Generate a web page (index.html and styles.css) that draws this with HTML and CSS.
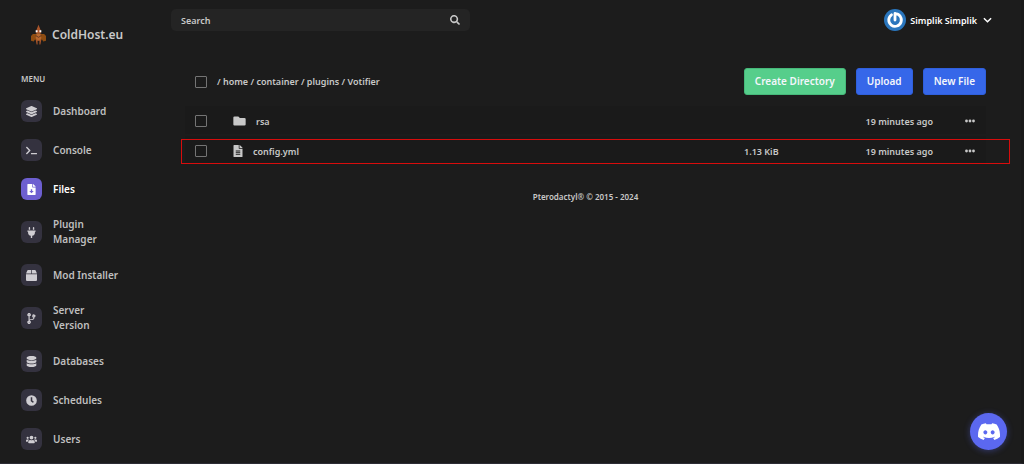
FILE: index.html
```
<!DOCTYPE html>
<html lang="en">
<head>
<meta charset="utf-8">
<meta name="viewport" content="width=device-width, initial-scale=1">
<title>ColdHost.eu</title>
<link rel="stylesheet" href="styles.css">
</head>
<body>
<div class="app">
  <aside class="sidebar">
    <a class="brand" href="#">
      <svg class="brand-logo" viewBox="0 0 16 22" aria-hidden="true">
        <path fill="#a9552a" d="M8 0 6 5 5 9h6l-1-4z"/>
        <path fill="#8f4d12" d="M2 10h12l2 2v5l-3 1-1-2H4l-1 2-3-1v-5z"/>
        <path fill="#b8692f" d="M6 9h4l1 5-1 3H6l-1-3z"/>
        <path fill="#a9552a" d="M5 16h2v5H6zM9 16h2l-1 5H9z"/>
        <path fill="#5b3524" d="M5 11l3 2 3-2v1l-3 2-3-2z"/>
        <path fill="#fff" d="M5 6h2v2H5zM9 6h2v2H9z"/>
      </svg>
      <span>ColdHost.eu</span>
    </a>
    <h2 class="menu-title">MENU</h2>
    <nav class="menu">
      <a class="item" href="#"><span class="tile"><svg viewBox="0 0 512 512"><path d="M12 148l232 105c8 4 17 4 25 0l232-105c16-7 16-32 0-39L269 4c-8-4-17-4-25 0L12 109c-16 7-16 32 0 39zm488 88l-58-26-160 72c-17 8-35 8-52 0L70 210l-58 26c-16 7-16 32 0 39l232 105c8 4 17 4 25 0l231-105c16-7 16-32 0-39zm0 128l-58-26-160 72c-17 8-35 8-52 0L70 338l-58 26c-16 7-16 32 0 39l232 105c8 4 17 4 25 0l231-105c16-7 16-32 0-39z"/></svg></span>Dashboard</a>
      <a class="item" href="#"><span class="tile"><svg viewBox="0 0 640 512"><path d="M258 274L64 467c-9 10-24 10-34 0L7 445c-9-10-9-25 0-34l154-155L7 101c-9-9-9-24 0-34l23-22c10-10 25-10 34 0l194 194c9 9 9 25 0 35zm382 150v32c0 13-11 24-24 24H312c-13 0-24-11-24-24v-32c0-13 11-24 24-24h304c13 0 24 11 24 24z"/></svg></span>Console</a>
      <a class="item active" href="#" aria-current="page"><span class="tile"><svg viewBox="0 0 384 512"><path fill-rule="evenodd" d="M224 136V0H24C11 0 0 11 0 24v464c0 13 11 24 24 24h336c13 0 24-11 24-24V160H248c-13 0-24-11-24-24zm-64 104h64v80h72L192 432 88 320h72zM256 0v128h128v-6c0-6-3-12-7-17L279 7c-5-4-11-7-17-7z"/></svg></span>Files</a>
      <a class="item" href="#"><span class="tile"><svg viewBox="0 0 384 512"><path d="M320 32a32 32 0 0 0-64 0v96h64zm48 128H16c-9 0-16 7-16 16v32c0 9 7 16 16 16h16v32a160 160 0 0 0 128 157v99h64v-99a160 160 0 0 0 128-157v-32h16c9 0 16-7 16-16v-32c0-9-7-16-16-16zM128 32a32 32 0 0 0-64 0v96h64z"/></svg></span>Plugin Manager</a>
      <a class="item" href="#"><span class="tile"><svg viewBox="0 0 512 512"><path d="M510 160L457 33a48 48 0 0 0-45-33H272v160zM240 0H100a48 48 0 0 0-45 33L2 160h238zM0 192v272a48 48 0 0 0 48 48h416a48 48 0 0 0 48-48V192z"/></svg></span>Mod Installer</a>
      <a class="item" href="#"><span class="tile"><svg viewBox="0 0 384 512"><path fill-rule="evenodd" d="M384 144a80 80 0 1 0-104 76c0 16-4 30-11 40-15 20-48 23-82 27-27 2-55 5-79 15V156a80 80 0 1 0-56 0v200a80 80 0 1 0 59 2c4-9 9-16 17-20 15-8 39-10 64-12 42-4 90-8 118-46 15-20 22-45 22-77a80 80 0 0 0 52-59zM80 64a16 16 0 1 1 0 32 16 16 0 0 1 0-32zm0 384a16 16 0 1 1 0-32 16 16 0 0 1 0 32zm224-320a16 16 0 1 1 0 32 16 16 0 0 1 0-32z"/></svg></span>Server Version</a>
      <a class="item" href="#"><span class="tile"><svg viewBox="0 0 448 512"><path d="M448 73v46c0 40-100 73-224 73S0 159 0 119V73C0 33 100 0 224 0s224 33 224 73zm0 103v103c0 40-100 73-224 73S0 319 0 279V176c48 33 136 49 224 49s176-16 224-49zm0 160v103c0 40-100 73-224 73S0 479 0 439V336c48 33 136 49 224 49s176-16 224-49z"/></svg></span>Databases</a>
      <a class="item" href="#"><span class="tile"><svg viewBox="0 0 512 512"><path fill-rule="evenodd" d="M256 8a248 248 0 1 0 0 496 248 248 0 0 0 0-496zm57 350l-88-64c-3-2-5-6-5-10V116c0-7 5-12 12-12h48c7 0 12 5 12 12v138l65 47c5 4 6 12 2 17l-28 39c-4 5-12 6-18 1z"/></svg></span>Schedules</a>
      <a class="item" href="#"><span class="tile"><svg viewBox="0 0 640 512"><path d="M96 224a64 64 0 1 0 0-128 64 64 0 0 0 0 128zm448 0a64 64 0 1 0 0-128 64 64 0 0 0 0 128zm32 32h-64c-18 0-34 7-45 19 40 22 69 62 75 109h66c18 0 32-14 32-32v-32a64 64 0 0 0-64-64zm-256 0a112 112 0 1 0 0-224 112 112 0 0 0 0 224zm77 32h-8a155 155 0 0 1-138 0h-8A115 115 0 0 0 128 403v29c0 27 22 48 48 48h288c27 0 48-21 48-48v-29a115 115 0 0 0-115-115zm-224-13c-11-12-27-19-45-19H64a64 64 0 0 0-64 64v32c0 18 14 32 32 32h66c6-47 35-87 75-109z"/></svg></span>Users</a>
    </nav>
  </aside>

  <div class="page">
    <header class="topbar">
      <form class="search" role="search">
        <input class="search-input" type="search" placeholder="Search" aria-label="Search">
        <button class="plain" type="button" aria-label="Submit search"><svg class="search-icon" viewBox="0 0 512 512"><path fill-rule="evenodd" d="M505 443L405 343c-4-5-10-7-17-7h-16a208 208 0 1 0-36 36v16c0 7 2 13 7 17l100 100c9 9 24 9 34 0l28-28c9-10 9-25 0-34zM208 336a128 128 0 1 1 0-256 128 128 0 0 1 0 256z"/></svg></button>
      </form>
      <button class="plain account" type="button">
        <svg class="avatar" viewBox="0 0 22 22" aria-hidden="true">
          <circle cx="11" cy="11" r="11" fill="#2a76bd"/>
          <path d="M11 4.500v6.500M7.500 5.800A6.300 6.300 0 1 0 11 4.700c5 0 6.500 4 6.200 6.800" fill="none" stroke="#fff" stroke-width="2.800" stroke-linecap="round"/>
        </svg>
        <span>Simplik Simplik</span>
        <svg class="chevron" viewBox="0 0 10 6" aria-hidden="true"><path d="M1 1l4 4 4-4" fill="none" stroke="currentColor" stroke-width="1.600"/></svg>
      </button>
    </header>

    <main class="content">
      <div class="toolbar">
        <input class="check" type="checkbox" aria-label="Select all files">
        <p class="path">/ home / container / plugins / Votifier</p>
        <div class="actions">
          <button class="btn btn-green" type="button">Create Directory</button>
          <button class="btn" type="button">Upload</button>
          <button class="btn" type="button">New File</button>
        </div>
      </div>

      <table class="files">
        <colgroup><col class="col-check"><col><col class="col-size"><col class="col-date"><col class="col-more"></colgroup>
        <tbody>
          <tr>
            <td><input class="check" type="checkbox" aria-label="Select rsa"></td>
            <td><a class="file" href="#"><svg class="folder" viewBox="0 0 512 416"><path d="M464 80H272L208 16H48A48 48 0 0 0 0 64v288a48 48 0 0 0 48 48h416a48 48 0 0 0 48-48V128a48 48 0 0 0-48-48z"/></svg>rsa</a></td>
            <td></td>
            <td class="date">19 minutes ago</td>
            <td class="more"><button class="plain" type="button" aria-label="Actions for rsa"><svg class="dots" viewBox="0 0 10 4"><circle cx="1.500" cy="2" r="1.400"/><circle cx="5" cy="2" r="1.400"/><circle cx="8.500" cy="2" r="1.400"/></svg></button></td>
          </tr>
          <tr class="marked">
            <td><input class="check" type="checkbox" aria-label="Select config.yml"></td>
            <td><a class="file" href="#"><svg class="doc" viewBox="0 0 384 512"><path fill-rule="evenodd" d="M224 136V0H24C11 0 0 11 0 24v464c0 13 11 24 24 24h336c13 0 24-11 24-24V160H248c-13 0-24-11-24-24zM96 236h192v40H96zm0 68h192v40H96zm0 68h192v40H96zM256 0v128h128v-6c0-6-3-12-7-17L279 7c-5-4-11-7-17-7z"/></svg>config.yml</a></td>
            <td>1.13 KiB</td>
            <td class="date">19 minutes ago</td>
            <td class="more"><button class="plain" type="button" aria-label="Actions for config.yml"><svg class="dots" viewBox="0 0 10 4"><circle cx="1.500" cy="2" r="1.400"/><circle cx="5" cy="2" r="1.400"/><circle cx="8.500" cy="2" r="1.400"/></svg></button></td>
          </tr>
        </tbody>
      </table>

      <footer class="footer">Pterodactyl® © 2015 - 2024</footer>
    </main>
  </div>
</div>
<a class="discord" href="#" aria-label="Discord"><svg viewBox="0 0 127 96"><path d="M107.700 8.070A105 105 0 0 0 81.470 0a72 72 0 0 0-3.360 6.830 98 98 0 0 0-29.110 0A72 72 0 0 0 45.640 0a106 106 0 0 0-26.250 8.090C2.790 32.650-1.710 56.600.54 80.210a106 106 0 0 0 32.170 16.150 78 78 0 0 0 6.890-11.110 68 68 0 0 1-10.850-5.180c.91-.66 1.800-1.340 2.660-2a75.600 75.600 0 0 0 64.320 0c.87.710 1.760 1.390 2.660 2a68 68 0 0 1-10.870 5.190 77 77 0 0 0 6.890 11.100 105 105 0 0 0 32.190-16.140c2.640-27.380-4.510-51.110-18.900-72.150zM42.450 65.690C36.180 65.690 31 60 31 53s5-12.740 11.430-12.740S54 46 53.890 53s-5.050 12.690-11.440 12.690zm42.240 0C78.410 65.690 73.250 60 73.250 53s5-12.740 11.440-12.740S96.230 46 96.120 53s-5.040 12.690-11.430 12.690z"/></svg></a>
</body>
</html>
```
FILE: styles.css
```
* { box-sizing: border-box; }

body {
  margin: 0;
  background: #1c1c1c;
  color: #c8c8c8;
  font: 600 10px/15px "Noto Sans", "Open Sans", sans-serif;
}

a { color: inherit; text-decoration: none; }
svg { display: block; fill: currentColor; }

.plain {
  display: block;
  padding: 0;
  border: 0;
  background: none;
  color: inherit;
  font: inherit;
  cursor: pointer;
}

.app {
  display: flex;
  min-height: 100vh;
  border-right: 3px solid #191919;
  border-bottom: 1px solid #2c2c34;
}

.sidebar {
  flex: none;
  width: 171px;
  padding: 24px 21px 13px;
}

.brand {
  display: flex;
  align-items: center;
  gap: 6px;
  padding-left: 10px;
  font-size: 12px;
  line-height: 22px;
}
.brand-logo { width: 15px; height: 22px; }

.menu-title {
  margin: 25px 0 14px;
  font-size: 8px;
  line-height: 15px;
  font-weight: 600;
}

.menu { display: flex; flex-direction: column; gap: 17px; }
.item {
  display: flex;
  align-items: center;
  gap: 11px;
  width: 100px;
  color: #bfbfbf;
}
.tile {
  display: grid;
  place-items: center;
  flex: none;
  width: 21px;
  height: 22px;
  border-radius: 6px;
  background: #34323f;
  color: #cfcdd2;
}
.tile svg { width: 11px; height: 11px; }
.active { color: #fff; }
.active .tile { background: #6d5fd0; color: #fff; }

.page { flex: 1; min-width: 0; }

.topbar {
  display: flex;
  justify-content: space-between;
  align-items: center;
  padding: 9px 29px 0 0;
}
.search {
  display: flex;
  align-items: center;
  flex: 0 1 299px;
  height: 22px;
  padding: 0 10px;
  border-radius: 5px;
  background: #242424;
}
.search-input {
  flex: 1;
  min-width: 0;
  padding: 0;
  border: 0;
  outline: 0;
  background: none;
  color: inherit;
  font: inherit;
}
.search, .account, .path, .files { font-size: 9px; }
.search-input::placeholder { color: #c8c8c8; opacity: 1; }
.search-icon { width: 10px; height: 10px; }
.account { display: flex; align-items: center; gap: 4px; color: #fff; }
.avatar { width: 22px; height: 22px; }
.chevron { width: 9px; height: 6px; margin-left: 2px; }

.content { padding: 37px 35px 0 14px; }

.toolbar { display: flex; align-items: center; padding-left: 10px; }
.check {
  appearance: none;
  display: block;
  flex: none;
  width: 12px;
  height: 12px;
  margin: 0;
  border: 1px solid #747474;
  border-radius: 1px;
}
.check:checked { background: #3366e8; }
.path { margin: 0 0 0 10px; }
.actions { display: flex; gap: 10px; margin-left: auto; }
.btn {
  height: 27px;
  padding: 0 10px;
  border: 1px solid #2f5fdc;
  border-radius: 3px;
  background: #3667e9;
  color: #f4f6fb;
  font: inherit;
  cursor: pointer;
}
.btn-green { border-color: #46b97a; background: #56ce8b; }

.files {
  width: 100%;
  margin-top: 9px;
  border-collapse: separate;
  border-spacing: 0 2px;
  table-layout: fixed;
}
.files tr { position: relative; background: #1a1a1a; }
.files td { height: 28px; padding: 2px 0 0; }
.col-check { width: 48px; }
.col-size { width: 100px; }
.col-date { width: 89px; }
.col-more { width: 53px; }
.files td:first-child { padding-left: 10px; }
.file { display: flex; align-items: center; gap: 10px; }
.folder { width: 13px; height: 10px; }
.doc { width: 10px; height: 12px; }
.files .date { text-align: right; }
.files .more { padding-left: 32px; }
.dots { width: 10px; height: 4px; }

/* Highlight frame drawn over the row, wider than the table */
.marked td:first-child::after {
  content: "";
  position: absolute;
  inset: 3px -24px 0 -4px;
  border: 1px solid #d80c0c;
  pointer-events: none;
}

.footer {
  margin-top: 23px;
  font-size: 8px;
  line-height: 15px;
  text-align: center;
}

.discord {
  position: fixed;
  right: 17px;
  bottom: 14px;
  display: grid;
  place-items: center;
  width: 37px;
  height: 37px;
  border-radius: 50%;
  background: #5b68f0;
  color: #fff;
  box-shadow: 0 1px 6px #5b68f066;
}
.discord svg { width: 22px; height: 17px; }
```
